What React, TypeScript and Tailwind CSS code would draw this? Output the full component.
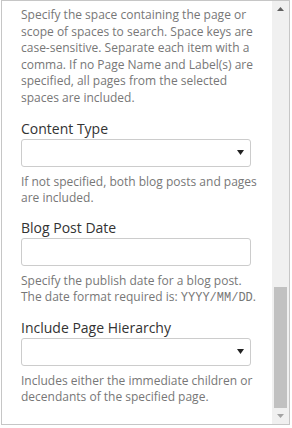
import type React from "react"

const font = { fontFamily: "'Segoe UI', 'Open Sans', 'Noto Sans', sans-serif" }

const Caret = () => (
  <svg width="7" height="5" viewBox="0 0 7 5" className="fill-[#222]">
    <path d="M0 0h7L3.5 5z" />
  </svg>
)

function Field({ label, select, help }: { label: string; select?: boolean; help: React.ReactNode }) {
  return (
    <div className="mt-[12px]">
      <div className="text-[14px] leading-[20px] text-[#333]">{label}</div>
      <div className="flex h-[28px] w-[230px] items-center justify-end rounded-[3px] border border-[#cccccc] bg-white pr-[6px]">
        {select && <Caret />}
      </div>
      <p className="mt-[7px] text-[12px] leading-[16px] text-[#777]">{help}</p>
    </div>
  )
}

export default function App() {
  return (
    <div className="h-[428px] w-[292px] bg-white pl-[1px]" style={font}>
      <div className="flex h-[425px] w-[289px] border border-[#c6c6c6]">
        {/* Form body */}
        <div className="flex-1 overflow-hidden pl-[19px] pr-[12px] pt-[6px]">
          <p className="text-[12px] leading-[16.6px] text-[#777]">
            Specify the space containing the page or scope of spaces to search. Space keys are case-sensitive.
            Separate each item with a comma. If no Page Name and Label(s) are specified, all pages from the
            selected spaces are included.
          </p>
          <Field label="Content Type" select help="If not specified, both blog posts and pages are included." />
          <Field
            label="Blog Post Date"
            help={
              <>
                Specify the publish date for a blog post. The date format required is:{" "}
                <span className="text-[12px] leading-[16px]" style={{ fontFamily: "'Liberation Mono', monospace" }}>
                  YYYY/MM/DD
                </span>
                .
              </>
            }
          />
          <Field
            label="Include Page Hierarchy"
            select
            help="Includes either the immediate children or decendants of the specified page."
          />
        </div>

        {/* Scrollbar */}
        <div className="flex w-[17px] flex-col items-center bg-[#f0f0f0]">
          <div className="flex h-[17px] items-center justify-center">
            <svg width="7" height="4" viewBox="0 0 7 4" className="fill-[#606060]">
              <path d="M0 4h7L3.5 0z" />
            </svg>
          </div>
          <div className="flex-1 w-full px-[2px]">
            <div className="mt-[270px] h-[121px] w-full bg-[#c1c1c1]" />
          </div>
          <div className="flex h-[17px] items-center justify-center">
            <svg width="7" height="4" viewBox="0 0 7 4" className="fill-[#a3a3a3]">
              <path d="M0 0h7L3.5 4z" />
            </svg>
          </div>
        </div>
      </div>
    </div>
  )
}
